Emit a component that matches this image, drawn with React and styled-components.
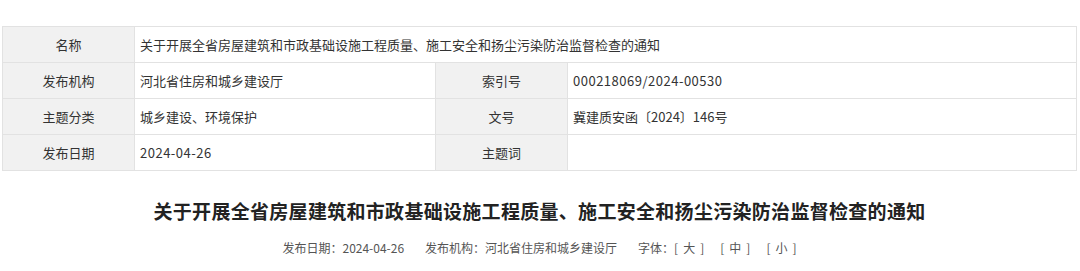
import React from 'react'
import styled, { createGlobalStyle } from 'styled-components'

const GlobalStyle = createGlobalStyle`
  body {
    margin: 0;
    background: #ffffff;
    font-family: 'Noto Sans CJK SC', 'Noto Sans', sans-serif;
    color: #333333;
  }
`

const rows = [
  [{ label: '名称', value: '关于开展全省房屋建筑和市政基础设施工程质量、施工安全和扬尘污染防治监督检查的通知', span: 3 }],
  [
    { label: '发布机构', value: '河北省住房和城乡建设厅' },
    { label: '索引号', value: '000218069/2024-00530', latin: true },
  ],
  [
    { label: '主题分类', value: '城乡建设、环境保护' },
    { label: '文号', value: '冀建质安函〔2024〕146号' },
  ],
  [
    { label: '发布日期', value: '2024-04-26', latin: true },
    { label: '主题词', value: '' },
  ],
]

const sizes = ['大', '中', '小']

export default function App() {
  return (
    <Page>
      <GlobalStyle />
      <InfoTable>
        <colgroup>
          <col style={{ width: 132 }} />
          <col style={{ width: 301 }} />
          <col style={{ width: 132 }} />
          <col />
        </colgroup>
        <tbody>
          {rows.map((row, i) => (
            <tr key={i}>
              {row.map(cell => (
                <React.Fragment key={cell.label}>
                  <Label>{cell.label}</Label>
                  <Value colSpan={cell.span || 1} latin={cell.latin}>
                    {cell.value}
                  </Value>
                </React.Fragment>
              ))}
            </tr>
          ))}
        </tbody>
      </InfoTable>
      <Title>关于开展全省房屋建筑和市政基础设施工程质量、施工安全和扬尘污染防治监督检查的通知</Title>
      <Meta>
        <MetaItem>发布日期：2024-04-26</MetaItem>
        <MetaItem>发布机构：河北省住房和城乡建设厅</MetaItem>
        <MetaItem>
          字体：
          {sizes.map(s => (
            <Size key={s}>
              [<SizeChar>{s}</SizeChar>]
            </Size>
          ))}
        </MetaItem>
      </Meta>
    </Page>
  )
}

const Page = styled.div`
  width: 1080px;
  height: 271px;
  padding: 26px 3px 0 2px;
  box-sizing: border-box;
  overflow: hidden;
`

const InfoTable = styled.table`
  width: 100%;
  border-collapse: collapse;
  table-layout: fixed;
  border: 1px solid #e2e2e2;
`

const Label = styled.td`
  height: 35px;
  padding: 0;
  background: #f1f1f1;
  border: 1px solid #e2e2e2;
  text-align: center;
  font-size: 13px;
  color: #333333;
`

const Value = styled.td.withConfig({ shouldForwardProp: p => p !== 'latin' })`
  height: 35px;
  padding: 0 0 0 5px;
  background: #ffffff;
  border: 1px solid #e2e2e2;
  font-size: 13px;
  color: #333333;
  white-space: nowrap;
  letter-spacing: ${props => (props.latin ? '0.5px' : '0')};
`

const Title = styled.h1`
  margin: 27px 0 0;
  text-align: center;
  font-size: 19px;
  letter-spacing: 0.3px;
  line-height: 26px;
  font-weight: 700;
  color: #222222;
`

const Meta = styled.div`
  margin-top: 16px;
  display: flex;
  justify-content: center;
  gap: 21px;
  font-size: 12px;
  line-height: 16px;
  color: #555555;
`

const MetaItem = styled.span`
  display: inline-flex;
  white-space: pre;
`

const Size = styled.span`
  margin-right: 16px;
  &:last-child {
    margin-right: 0;
  }
`

const SizeChar = styled.span`
  margin: 0 5px;
`
